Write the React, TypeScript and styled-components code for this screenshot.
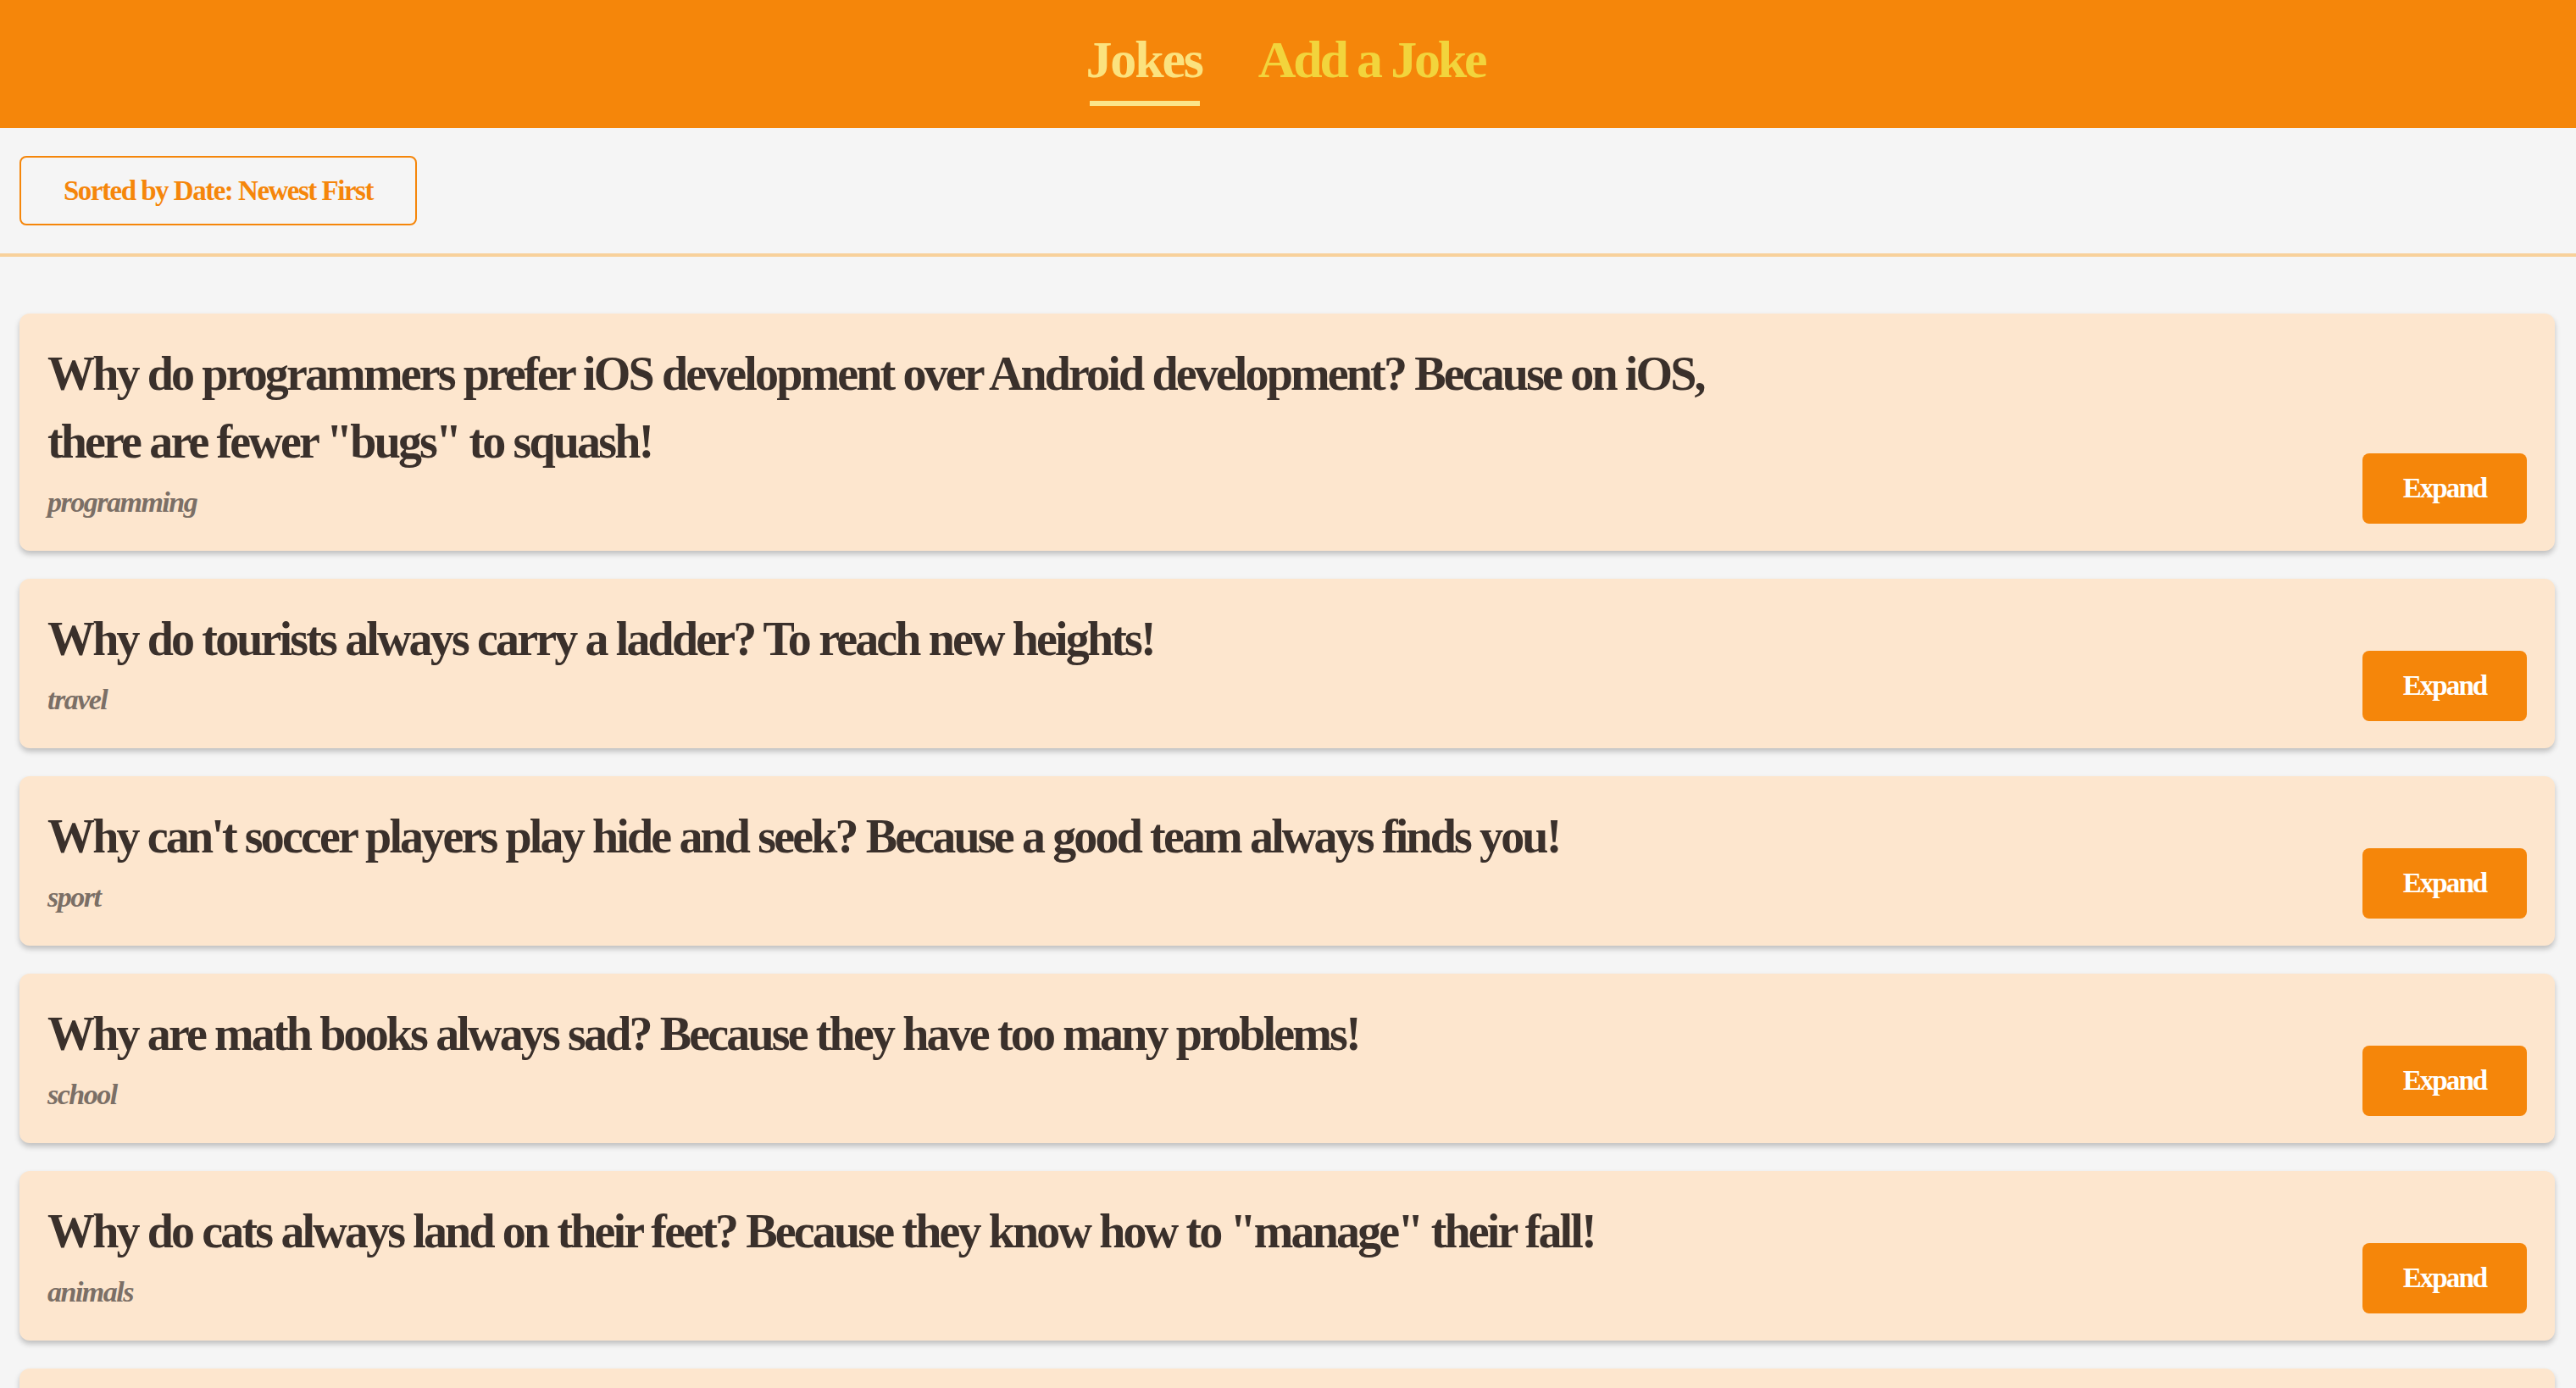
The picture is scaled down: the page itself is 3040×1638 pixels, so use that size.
import React from "react";
import styled, { createGlobalStyle } from "styled-components";

const GlobalStyle = createGlobalStyle`
  html, body {
    margin: 0;
    padding: 0;
    background: #f5f5f5;
    font-family: "Liberation Serif", "DejaVu Serif", serif;
  }
  * { box-sizing: border-box; }
`;

const Header = styled.header`
  height: 151px;
  background: #f5860a;
  display: flex;
  justify-content: center;
  align-items: flex-start;
  gap: 66px;
  padding-top: 39px;
  padding-right: 6px;
`;

const NavLink = styled.a<{ $active?: boolean }>`
  display: flex;
  flex-direction: column;
  font-size: 62px;
  line-height: 62px;
  font-weight: 700;
  letter-spacing: ${(p) => (p.$active ? "-2.2px" : "-3.2px")};
  color: ${(p) => (p.$active ? "#fbe27e" : "#f2d43c")};
  cursor: pointer;
  text-decoration: none;
  &::after {
    content: "";
    display: block;
    height: 6px;
    margin-top: 18px;
    margin-left: 4px;
    margin-right: 3px;
    background: ${(p) => (p.$active ? "#fbe58a" : "transparent")};
  }
`;

const Toolbar = styled.div`
  padding: 33px 23px;
  border-bottom: 4px solid #f8d19b;
`;

const SortButton = styled.button`
  height: 82px;
  padding: 0 50px;
  background: transparent;
  border: 2px solid #f5860a;
  border-radius: 8px;
  color: #f5860a;
  font-family: "Liberation Serif", serif;
  font-weight: 700;
  font-size: 33px;
  letter-spacing: -1.5px;
  cursor: pointer;
`;

const List = styled.main`
  display: flex;
  flex-direction: column;
  gap: 33px;
  padding: 67px 25px 40px 23px;
`;

const Card = styled.article`
  display: flex;
  justify-content: space-between;
  align-items: flex-end;
  gap: 40px;
  background: #fde6ce;
  border-radius: 12px;
  padding: 31px 33px 34px 33px;
  box-shadow: 0 4px 6px rgba(0, 0, 0, 0.22);
`;

const Body = styled.div`
  display: flex;
  flex-direction: column;
  max-width: 2040px;
`;

const JokeText = styled.p`
  margin: 0;
  font-size: 56px;
  line-height: 80px;
  font-weight: 700;
  letter-spacing: -2.85px;
  color: #3a302b;
`;

const Category = styled.span`
  margin-top: 9px;
  font-size: 34px;
  line-height: 46px;
  font-weight: 700;
  font-style: italic;
  letter-spacing: -1.5px;
  color: #7b6f66;
`;

const ExpandButton = styled.button`
  flex: none;
  height: 83px;
  width: 194px;
  margin-bottom: -2px;
  border: none;
  border-radius: 8px;
  background: #f5860a;
  color: #ffffff;
  font-family: "Liberation Serif", serif;
  font-weight: 700;
  font-size: 33px;
  letter-spacing: -1.9px;
  cursor: pointer;
`;

const jokes = [
  {
    text: 'Why do programmers prefer iOS development over Android development? Because on iOS, there are fewer "bugs" to squash!',
    category: "programming",
  },
  { text: "Why do tourists always carry a ladder? To reach new heights!", category: "travel" },
  {
    text: "Why can't soccer players play hide and seek? Because a good team always finds you!",
    category: "sport",
  },
  { text: "Why are math books always sad? Because they have too many problems!", category: "school" },
  {
    text: 'Why do cats always land on their feet? Because they know how to "manage" their fall!',
    category: "animals",
  },
  { text: "Why did the scarecrow win an award? Because he was outstanding in his field!", category: "farm" },
];

export default function App() {
  return (
    <>
      <GlobalStyle />
      <Header>
        <NavLink $active>Jokes</NavLink>
        <NavLink>Add a Joke</NavLink>
      </Header>
      <Toolbar>
        <SortButton>Sorted by Date: Newest First</SortButton>
      </Toolbar>
      <List>
        {jokes.map((j, i) => (
          <Card key={i}>
            <Body>
              <JokeText>{j.text}</JokeText>
              <Category>{j.category}</Category>
            </Body>
            <ExpandButton>Expand</ExpandButton>
          </Card>
        ))}
      </List>
    </>
  );
}
